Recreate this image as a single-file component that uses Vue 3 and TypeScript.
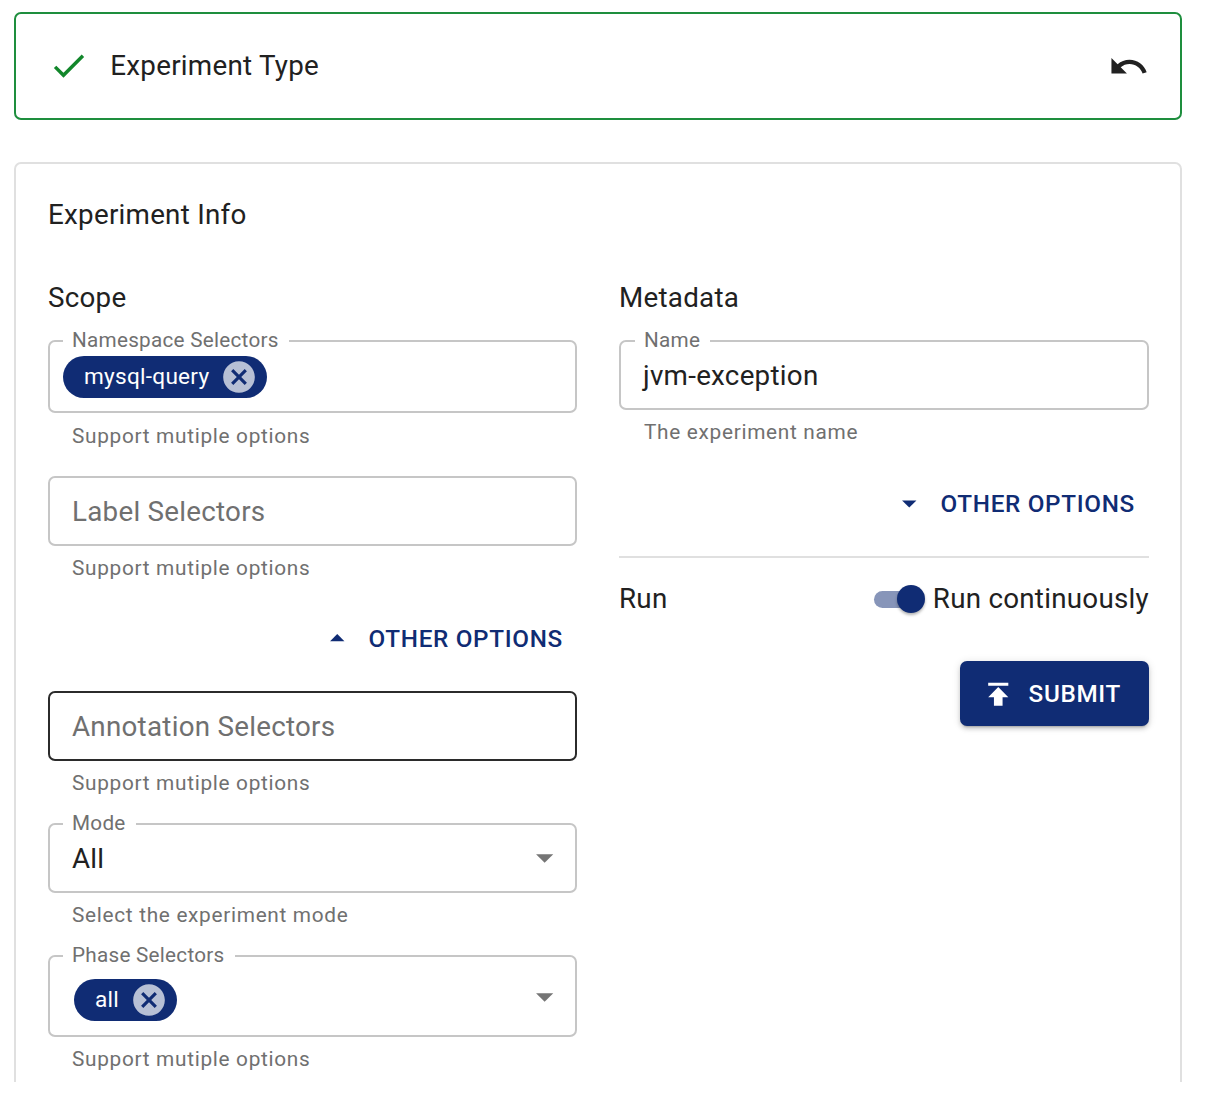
<script setup lang="ts">
import { ref } from 'vue'

interface Field {
  id: string
  label: string
  helper: string
  value?: string
  chip?: string
  select?: boolean
  hovered?: boolean
}

const selectors: Field[] = [
  { id: 'namespace', label: 'Namespace Selectors', helper: 'Support mutiple options', chip: 'mysql-query' },
  { id: 'label', label: 'Label Selectors', helper: 'Support mutiple options' },
]

const advanced: Field[] = [
  { id: 'annotation', label: 'Annotation Selectors', helper: 'Support mutiple options', hovered: true },
  { id: 'mode', label: 'Mode', helper: 'Select the experiment mode', value: 'All', select: true },
  { id: 'phase', label: 'Phase Selectors', helper: 'Support mutiple options', chip: 'all', select: true },
]

const closePath =
  'M12 2C6.47 2 2 6.47 2 12s4.47 10 10 10 10-4.47 10-10S17.53 2 12 2zm5 13.59L15.59 17 12 13.41 8.41 17 7 15.59 10.59 12 7 8.41 8.41 7 12 10.59 15.59 7 17 8.41 13.41 12 17 15.59z'

const continuous = ref(true)
</script>

<template>
  <main class="page">
    <section class="paper done">
      <svg class="icon check" viewBox="0 0 24 24"><path d="M9 16.17 4.83 12l-1.42 1.41L9 19 21 7l-1.41-1.41z" /></svg>
      <h2 class="text">Experiment Type</h2>
      <svg class="icon undo" viewBox="0 0 24 24">
        <path d="M12.5 8c-2.65 0-5.05.99-6.9 2.6L2 7v9h9l-3.62-3.62c1.39-1.16 3.16-1.88 5.12-1.88 3.54 0 6.55 2.31 7.6 5.5l2.37-.78C21.08 11.03 17.15 8 12.5 8z" />
      </svg>
    </section>

    <section class="paper info">
      <h2 class="text title">Experiment Info</h2>
      <div class="columns">
        <div class="column">
          <h3 class="text heading">Scope</h3>
          <div v-for="f in selectors" :key="f.id" class="field" :class="f.id">
            <div class="control">
              <span v-if="f.chip" class="legend">{{ f.label }}</span>
              <span v-if="f.chip" class="chip">
                <span class="chip-text">{{ f.chip }}</span>
                <svg class="close" viewBox="0 0 24 24"><path :d="closePath" /></svg>
              </span>
              <span v-else class="placeholder">{{ f.label }}</span>
            </div>
            <p class="helper">{{ f.helper }}</p>
          </div>

          <button class="toggle scope-toggle">
            <svg class="small" viewBox="0 0 24 24"><path d="m7 14 5-5 5 5z" /></svg>
            <span>OTHER OPTIONS</span>
          </button>

          <div v-for="f in advanced" :key="f.id" class="field" :class="f.id">
            <div class="control" :class="{ hovered: f.hovered }">
              <span v-if="f.select" class="legend">{{ f.label }}</span>
              <span v-else class="placeholder">{{ f.label }}</span>
              <span v-if="f.value" class="value">{{ f.value }}</span>
              <span v-if="f.chip" class="chip">
                <span class="chip-text">{{ f.chip }}</span>
                <svg class="close" viewBox="0 0 24 24"><path :d="closePath" /></svg>
              </span>
              <svg v-if="f.select" class="icon arrow" viewBox="0 0 24 24"><path d="m7 10 5 5 5-5z" /></svg>
            </div>
            <p class="helper">{{ f.helper }}</p>
          </div>
        </div>

        <div class="column">
          <h3 class="text heading">Metadata</h3>
          <div class="field name">
            <div class="control">
              <span class="legend">Name</span>
              <span class="value">jvm-exception</span>
            </div>
            <p class="helper">The experiment name</p>
          </div>
          <button class="toggle meta-toggle">
            <svg class="small" viewBox="0 0 24 24"><path d="m7 10 5 5 5-5z" /></svg>
            <span>OTHER OPTIONS</span>
          </button>
          <div class="divider"></div>
          <div class="run">
            <h3 class="text">Run</h3>
            <label class="switch-row" @click="continuous = !continuous">
              <span class="switch" :class="{ on: continuous }"><span class="thumb"></span></span>
              <span class="text">Run continuously</span>
            </label>
          </div>
          <button class="submit">
            <svg class="small" viewBox="0 0 24 24"><path d="M5 4v2h14V4H5zm0 10h4v6h6v-6h4l-7-7-7 7z" /></svg>
            <span>SUBMIT</span>
          </button>
        </div>
      </div>
    </section>
  </main>
</template>

<style>
body {
  background: #fff;
}
</style>

<style scoped>
* {
  box-sizing: border-box;
}

.page {
  display: flex;
  flex-direction: column;
  gap: 42px;
  width: 1216px;
  height: 1082px;
  overflow: hidden;
  padding: 12px 34px 0 14px;
  font-family: Roboto, 'Liberation Sans', sans-serif;
  font-size: 27.75px;
  line-height: 40px;
  letter-spacing: 0.00938em;
  color: #212121;
}

h2,
h3,
p {
  margin: 0;
}

.text {
  font-size: 27.75px;
  font-weight: 400;
  line-height: 40px;
}

svg {
  display: block;
  flex: none;
  fill: currentColor;
}

.icon {
  width: 41.3px;
  height: 41.3px;
}

.small {
  width: 34.5px;
  height: 34.5px;
}

.paper {
  flex: none;
  border: 2px solid #e0e0e0;
  border-radius: 7px;
}

.done {
  display: flex;
  align-items: center;
  height: 108px;
  padding: 0 31px 0 32px;
  border-color: #1e8e3e;
}

.check {
  color: #12872b;
}

.done .text {
  margin-left: 21px;
}

.undo {
  margin-top: 1px;
  margin-left: auto;
}

.info {
  height: 1000px;
  padding: 31px 31px 0 32px;
}

.columns {
  display: flex;
  gap: 42px;
  margin-top: 43px;
}

.column {
  display: flex;
  flex-direction: column;
  width: 529px;
}

.column + .column {
  width: 530px;
}

.heading {
  margin-bottom: 22px;
}

.control {
  position: relative;
  display: flex;
  align-items: center;
  height: 70px;
  padding: 0 10px 0 22px;
  border: 2px solid #c6c6c6;
  border-radius: 7px;
}

.control.hovered {
  border-color: #2b2b2b;
}

.legend {
  position: absolute;
  top: -17px;
  left: 13px;
  padding: 0 10px 0 9px;
  background: #fff;
  font-size: 20.7px;
  line-height: 30px;
  color: #707070;
  white-space: nowrap;
}

.placeholder {
  padding-top: 2px;
  color: #707070;
}

.value {
  padding-top: 2px;
}

.arrow {
  margin-left: auto;
  color: #757575;
}

.helper {
  margin-top: 7px;
  padding-left: 24px;
  font-size: 20.8px;
  line-height: 30px;
  letter-spacing: 0.03333em;
  color: #707070;
}

.namespace .control {
  height: 73px;
  padding-left: 13px;
}

.namespace .helper {
  margin-top: 8px;
}

.label {
  margin-top: 25px;
}

.mode {
  margin-top: 25px;
}

.phase {
  margin-top: 25px;
}

.phase .control {
  height: 82px;
  padding-left: 24px;
}

.phase .chip {
  margin-top: 8px;
}

.phase .arrow {
  margin-top: 2px;
}

.phase .chip-text {
  margin-top: -1px;
}

.name .legend {
  left: 14px;
}

.name .helper {
  padding-left: 25px;
}

.chip {
  display: flex;
  align-items: center;
  height: 42px;
  padding: 0 9px 0 21px;
  border-radius: 21px;
  background: #102c74;
  color: #fff;
}

.chip-text {
  font-size: 22.6px;
  line-height: 32px;
}

.close {
  width: 38px;
  height: 38px;
  margin-left: 10.5px;
  color: rgba(255, 255, 255, 0.7);
}

button {
  display: flex;
  align-items: center;
  border: 0;
  font-family: inherit;
  font-size: 24.25px;
  font-weight: 500;
  line-height: 42px;
  letter-spacing: 0.02857em;
}

.toggle {
  align-self: flex-end;
  gap: 14px;
  height: 64px;
  padding: 0 14px;
  background: transparent;
  color: #102c74;
}

.toggle .small {
  margin-bottom: 1px;
}

.scope-toggle {
  margin: 24px 0 20px;
}

.meta-toggle {
  margin-top: 25px;
}

.divider {
  height: 2px;
  margin-top: 20px;
  background: #e0e0e0;
}

.run {
  display: flex;
  align-items: center;
  justify-content: space-between;
  margin-top: 21px;
}

.switch-row {
  display: flex;
  align-items: center;
}

.switch {
  display: flex;
  align-items: center;
  width: 45px;
  height: 17px;
  margin-right: 14px;
  border-radius: 9px;
  background: #bdbdbd;
}

.switch.on {
  background: #8795b9;
}

.thumb {
  flex: none;
  width: 28px;
  height: 28px;
  border-radius: 50%;
  background: #fff;
  box-shadow: 0 2px 3px rgba(0, 0, 0, 0.3);
}

.on .thumb {
  margin-left: 23px;
  background: #102c74;
}

.submit {
  align-self: flex-end;
  gap: 13px;
  width: 189px;
  height: 65px;
  margin-top: 42px;
  padding: 0 0 0 21px;
  border-radius: 7px;
  background: #102c74;
  color: #fff;
  box-shadow: 0 4px 2px -3px rgba(0, 0, 0, 0.2), 0 3px 4px rgba(0, 0, 0, 0.14), 0 1px 8px rgba(0, 0, 0, 0.12);
}

.submit .small {
  margin-top: 2px;
}
</style>
